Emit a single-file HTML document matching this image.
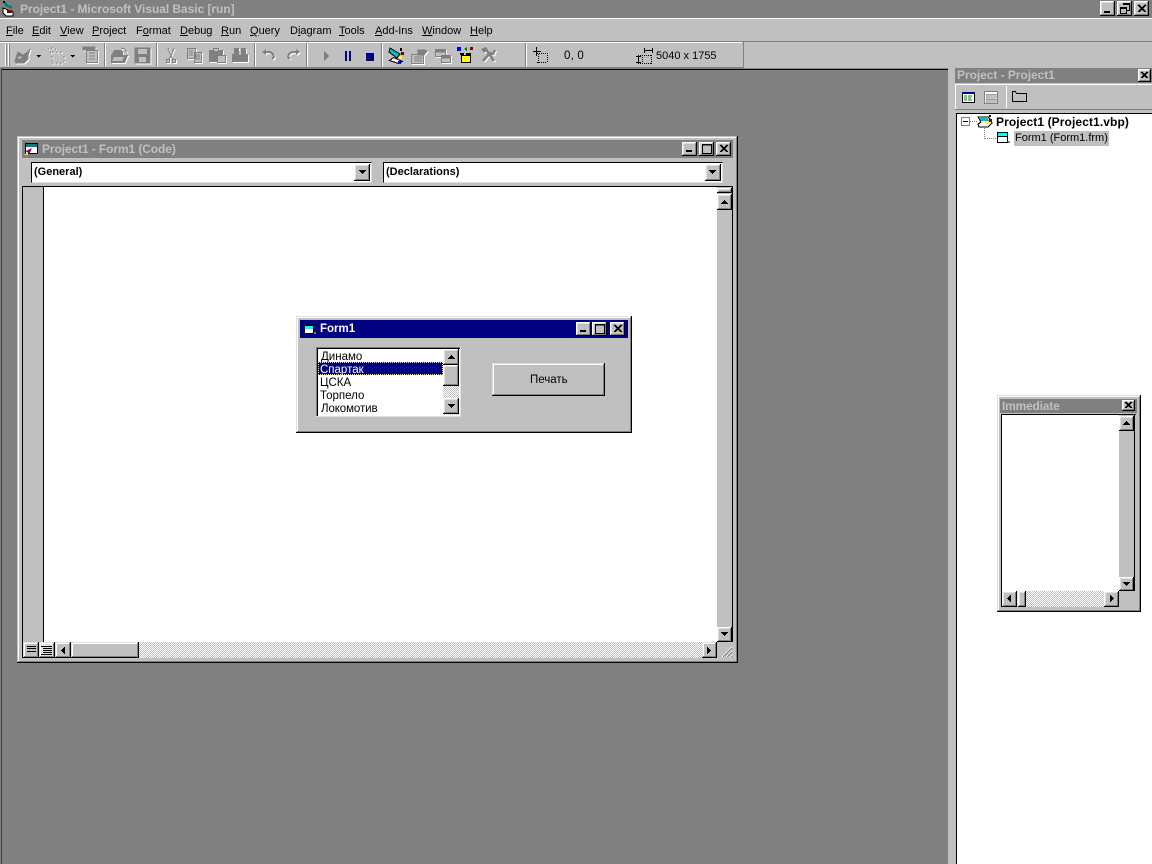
<!DOCTYPE html>
<html><head><meta charset="utf-8"><style>
html,body{margin:0;padding:0}
body{width:1152px;height:864px;overflow:hidden;background:#808080;position:relative;font:11px "Liberation Sans","Noto Sans CJK SC",sans-serif;color:#000}
div,span.a{position:absolute;box-sizing:border-box}
.t{white-space:nowrap;line-height:13px}
.g{background:#c0c0c0}
.w{background:#fff}
.k{background:#000}
.d{background:#808080}
.b{background:#c0c0c0;box-shadow:inset -1px -1px #000,inset 1px 1px #fff,inset -2px -2px #808080,inset 2px 2px #dfdfdf}
.f{box-shadow:inset -1px -1px #000,inset 1px 1px #dfdfdf,inset -2px -2px #808080,inset 2px 2px #fff;background:#c0c0c0}
.h{background:repeating-conic-gradient(#fff 0 25%,#c0c0c0 0 50%) 0 0/2px 2px}
.tt{font-weight:bold;color:#c0c0c0;font-size:12px;white-space:nowrap;line-height:14px}
.sep{width:2px;height:24px;top:43px;background:#fff;border-left:1px solid #808080}
</style></head><body>
<!-- Main title -->
<div class="tt" style="left:20px;top:2px;letter-spacing:-.05px">Project1 - Microsoft Visual Basic [run]</div>
<div class="w" style="left:0;top:18px;width:1152px;height:1px"></div>
<div class="g" style="left:0;top:19px;width:1152px;height:22px"></div>
<div class="d" style="left:0;top:41px;width:1152px;height:1px"></div>
<div class="g" style="left:0;top:42px;width:1152px;height:26px"></div>
<div class="w" style="left:0;top:42px;width:742px;height:1px"></div>
<div class="d" style="left:0;top:67px;width:743px;height:2px"></div>
<div class="d" style="left:743px;top:42px;width:1px;height:26px"></div>
<div class="k" style="left:2px;top:69px;width:946px;height:1px"></div>
<div class="k" style="left:1px;top:69px;width:1px;height:795px;opacity:.5"></div>
<!-- Menu -->
<div class="t" style="left:6px;top:25px"><u>F</u>ile</div>
<div class="t" style="left:32px;top:25px"><u>E</u>dit</div>
<div class="t" style="left:60px;top:25px"><u>V</u>iew</div>
<div class="t" style="left:92px;top:25px"><u>P</u>roject</div>
<div class="t" style="left:136px;top:25px">F<u>o</u>rmat</div>
<div class="t" style="left:180px;top:25px"><u>D</u>ebug</div>
<div class="t" style="left:221px;top:25px"><u>R</u>un</div>
<div class="t" style="left:250px;top:25px"><u>Q</u>uery</div>
<div class="t" style="left:290px;top:25px">D<u>i</u>agram</div>
<div class="t" style="left:339px;top:25px"><u>T</u>ools</div>
<div class="t" style="left:375px;top:25px"><u>A</u>dd-Ins</div>
<div class="t" style="left:422px;top:25px"><u>W</u>indow</div>
<div class="t" style="left:470px;top:25px"><u>H</u>elp</div>
<!-- Main window buttons -->
<div class="b" style="left:1100px;top:1px;width:15px;height:15px"></div>
<div class="b" style="left:1117px;top:1px;width:15px;height:15px"></div>
<div class="b" style="left:1134px;top:1px;width:15px;height:15px"></div>
<!-- Toolbar gripper & seps -->
<div class="w" style="left:5px;top:44px;width:2px;height:22px;border-right:1px solid #808080"></div>
<div class="w" style="left:8px;top:44px;width:2px;height:22px;border-right:1px solid #808080"></div>
<div class="sep" style="left:104px"></div>
<div class="sep" style="left:156px"></div>
<div class="sep" style="left:254px"></div>
<div class="sep" style="left:306px"></div>
<div class="sep" style="left:381px"></div>
<div class="sep" style="left:525px"></div>
<div class="t" style="left:564px;top:50px;font-size:11.5px;letter-spacing:.2px">0, 0</div>
<div class="t" style="left:656px;top:50px;font-size:11px">5040 x 1755</div>
<!-- Right panel -->
<div class="g" style="left:948px;top:68px;width:204px;height:796px"></div>
<div class="d" style="left:955px;top:68px;width:197px;height:15px"></div>
<div class="tt" style="left:957px;top:68px;letter-spacing:-.05px">Project - Project1</div>
<div class="b" style="left:1138px;top:69px;width:13px;height:13px"></div>
<div class="w" style="left:955px;top:84px;width:197px;height:1px"></div>
<div class="w" style="left:955px;top:84px;width:1px;height:25px"></div>
<div class="d" style="left:955px;top:109px;width:197px;height:1px"></div>
<div class="w" style="left:956px;top:113px;width:196px;height:751px"></div>
<div class="k" style="left:956px;top:113px;width:196px;height:1px"></div>
<div class="k" style="left:956px;top:113px;width:1px;height:751px"></div>
<div class="t" style="left:996px;top:116px;font-weight:bold;font-size:12px;letter-spacing:.1px">Project1 (Project1.vbp)</div>
<div class="g" style="left:1014px;top:131px;width:95px;height:15px"></div>
<div class="t" style="left:1015px;top:132px">Form1 (Form1.frm)</div>
<div style="left:1006px;top:86px;width:1px;height:22px;background:#fff"></div>
<!-- Code window -->
<div class="g" style="left:17px;top:136px;width:721px;height:527px;box-shadow:inset -1px -1px #000,inset 1px 1px #c0c0c0,inset -2px -2px #808080,inset 2px 2px #fff"></div>
<div class="d" style="left:22px;top:140px;width:711px;height:18px"></div>
<div class="tt" style="left:42px;top:142px;letter-spacing:-.1px">Project1 - Form1 (Code)</div>
<div class="b" style="left:682px;top:142px;width:15px;height:14px"></div>
<div class="b" style="left:699px;top:142px;width:15px;height:14px"></div>
<div class="b" style="left:716px;top:142px;width:15px;height:14px"></div>
<!-- combos -->
<div class="w" style="left:31px;top:162px;width:341px;height:21px;border-top:1px solid #000;border-left:1px solid #000;border-bottom:1px solid #dfdfdf;border-right:1px solid #dfdfdf"></div>
<div class="t" style="left:34px;top:166px;font-weight:bold">(General)</div>
<div class="b" style="left:354px;top:164px;width:16px;height:17px"></div>
<div class="w" style="left:383px;top:162px;width:340px;height:21px;border-top:1px solid #000;border-left:1px solid #000;border-bottom:1px solid #dfdfdf;border-right:1px solid #dfdfdf"></div>
<div class="t" style="left:386px;top:166px;font-weight:bold">(Declarations)</div>
<div class="b" style="left:705px;top:164px;width:16px;height:17px"></div>
<!-- code area -->
<div class="k" style="left:22px;top:186px;width:711px;height:1px"></div>
<div class="k" style="left:22px;top:186px;width:1px;height:472px"></div>
<div class="w" style="left:23px;top:187px;width:694px;height:455px"></div>
<div class="g" style="left:23px;top:187px;width:20px;height:455px"></div>
<div class="k" style="left:43px;top:187px;width:1px;height:455px"></div>
<div class="g" style="left:717px;top:187px;width:16px;height:471px"></div>
<div class="k" style="left:732px;top:186px;width:1px;height:456px"></div>
<div class="b" style="left:717px;top:188px;width:15px;height:5px"></div>
<div class="b" style="left:717px;top:194px;width:15px;height:16px"></div>
<div class="b" style="left:717px;top:627px;width:15px;height:15px"></div>
<div class="f" style="left:23px;top:642px;width:16px;height:16px"></div>
<div class="f" style="left:39px;top:642px;width:16px;height:16px;background:#dfdfdf"></div>
<div class="f" style="left:55px;top:642px;width:16px;height:16px"></div>
<div class="f" style="left:71px;top:642px;width:68px;height:16px"></div>
<div class="h" style="left:139px;top:642px;width:563px;height:16px"></div>
<div class="f" style="left:702px;top:642px;width:15px;height:16px"></div>
<!-- Form1 -->
<div class="g" style="left:296px;top:316px;width:336px;height:117px;box-shadow:inset -1px -1px #000,inset 1px 1px #dfdfdf,inset -2px -2px #808080,inset 2px 2px #fff"></div>
<div style="left:300px;top:320px;width:328px;height:18px;background:#000080"></div>
<div class="t" style="left:320px;top:323px;color:#fff;font-weight:bold;font-size:11.5px">Form1</div>
<div class="b" style="left:576px;top:322px;width:15px;height:14px"></div>
<div class="b" style="left:592px;top:322px;width:15px;height:14px"></div>
<div class="b" style="left:610px;top:322px;width:15px;height:14px"></div>
<!-- listbox -->
<div class="w" style="left:316px;top:347px;width:145px;height:70px;box-shadow:inset -1px -1px #dfdfdf,inset 1px 1px #808080,inset 2px 2px #000"></div>
<div class="t" style="left:321px;top:351px;font-size:11.5px">Динамо</div>
<div style="left:318px;top:362px;width:125px;height:13px;background:#000080;outline:1px dotted #ff0;outline-offset:-1px"></div>
<div class="t" style="left:320px;top:364px;font-size:11.5px;color:#fff">Спартак</div>
<div class="t" style="left:320px;top:377px;font-size:11.5px">ЦСКА</div>
<div class="t" style="left:320px;top:390px;font-size:11.5px">Торпело</div>
<div class="t" style="left:321px;top:403px;font-size:11.5px;letter-spacing:-.1px">Локомотив</div>
<div class="h" style="left:443px;top:349px;width:16px;height:66px"></div>
<div class="b" style="left:443px;top:349px;width:16px;height:16px"></div>
<div class="b" style="left:443px;top:365px;width:16px;height:21px"></div>
<div class="b" style="left:443px;top:398px;width:16px;height:16px"></div>
<!-- print button -->
<div class="f" style="left:492px;top:363px;width:113px;height:33px"></div>
<div class="t" style="left:530px;top:374px;font-size:11.5px">Печать</div>
<!-- Immediate -->
<div class="g" style="left:997px;top:395px;width:144px;height:217px;box-shadow:inset -1px -1px #000,inset 1px 1px #dfdfdf,inset -2px -2px #808080,inset 2px 2px #fff"></div>
<div class="d" style="left:1000px;top:399px;width:137px;height:14px"></div>
<div class="tt" style="left:1002px;top:399px;letter-spacing:-.2px">Immediate</div>
<div class="b" style="left:1122px;top:400px;width:13px;height:11px"></div>
<div class="w" style="left:1001px;top:415px;width:118px;height:176px"></div>
<div class="k" style="left:1001px;top:414px;width:135px;height:1px"></div>
<div class="k" style="left:1001px;top:414px;width:1px;height:193px"></div>
<div class="k" style="left:1134px;top:414px;width:1px;height:177px"></div>
<div class="g" style="left:1119px;top:415px;width:15px;height:176px"></div>
<div class="b" style="left:1119px;top:416px;width:15px;height:15px"></div>
<div class="b" style="left:1119px;top:577px;width:15px;height:14px"></div>
<div class="h" style="left:1002px;top:591px;width:117px;height:16px"></div>
<div class="b" style="left:1002px;top:591px;width:15px;height:16px"></div>
<div class="b" style="left:1018px;top:591px;width:8px;height:16px"></div>
<div class="b" style="left:1104px;top:591px;width:15px;height:16px"></div>
<!-- Disabled toolbar icons, with white emboss -->
<svg style="position:absolute;left:0;top:0;filter:drop-shadow(1px 1px 0 #fff)" width="1152" height="100" viewBox="0 0 1152 100" fill="none">
<g stroke="#808080" fill="#808080" shape-rendering="crispEdges">
<path d="M15 61l3-9 5 3 5-3 2-3-2 6 0 4-4 4H16z"/><path d="M18 56h5l-2 3h-4z" fill="#c0c0c0"/>
<path fill="none" d="M48 49h1M52 47v2M55 49h1M50 52l1 1"/>
<path fill="none" d="M52 52h2M56 52h2M60 52h2M52 56v2M52 60v2M52 63h2M56 63h2M60 63h2M64 56v2M64 60v2"/>
<path fill="#c0c0c0" d="M86.500 50.500h11v12h-11z"/><path d="M83 47h12v3H83z"/><path fill="none" d="M89 53h6M89 56h6M89 59h6"/>
<path d="M111.500 55.500l3-5h6l2 2v3h5l-3 7h-13z"/><path fill="#c0c0c0" stroke="none" d="M114 57h10l-2 4h-10z"/><path fill="none" d="M121 48l4 1 2 3"/>
<path d="M135 48h15v15h-15z"/><path fill="#c0c0c0" stroke="none" d="M138 49h9v5h-9zM139 57h7v5h-7z"/>
<path fill="none" d="M168 48l3 8 3-8"/><path fill="none" d="M171 56l-3 4M171 56l3 4"/><path fill="#c0c0c0" d="M166.500 59.500h3v3h-3zM172.500 59.500h3v3h-3z"/>
<path fill="#c0c0c0" d="M187.500 48.500h8v10h-8zM194.500 52.500h7v10h-7z"/><path fill="none" d="M189 51h4M189 53h4M189 55h4M196 55h4M196 57h4M196 59h4"/>
<path d="M209.500 50.500h13v11h-13z"/><path fill="#c0c0c0" d="M213.500 48.500h5v3h-5zM217.500 55.500h8v7h-8z"/>
<path d="M234.500 48.500h4v6h-4zM241.500 48.500h4v6h-4zM232.500 54.500h7v7h-7zM240.500 54.500h7v7h-7z"/><path fill="#c0c0c0" stroke="none" d="M239 51h2v4h-2z"/>
<path fill="#c0c0c0" d="M411.500 54.500h12v9h-12z"/><path fill="none" d="M414 57h8M414 59h8M414 61h8"/><path d="M418 50h7l2 1-3 4h-6z"/>
<path fill="#c0c0c0" d="M435.500 49.500h10v7h-10zM441.500 55.500h9v7h-9z"/><path d="M436 50h9v2h-9zM442 56h8v2h-8z"/>
</g>
<g stroke="#808080" fill="#808080">
<path fill="none" stroke-width="2" d="M264 52h6l3 2 1 3-2 2M298 52h-6l-3 2-1 3 2 2"/><path d="M266 49v6l-4-3zM296 49v6l4-3z" stroke="none"/>
<path fill="none" stroke-width="2.500" d="M483 51l3-2 8 12M495 50l-2 4-3-1-7 8"/><path d="M481 49l5-2 2 3-4 3z" stroke="none"/>
</g>
</svg>
<!-- Icons -->
<svg style="position:absolute;left:0;top:0" width="1152" height="864" viewBox="0 0 1152 864" fill="none" shape-rendering="crispEdges">
<!-- app icon -->
<path d="M3 8l10 4v4H6L3 13z" fill="#fff" stroke="#000"/><path d="M4 2l2 0 2 3 4 1v3L5 6z" fill="#008080"/><path d="M7 10h5v3H7z" fill="#800000"/><path d="M3 1h2v2H3z" fill="#000"/>
<!-- window btn glyphs -->
<path d="M1104 11h6v2h-6z" fill="#000"/>
<path d="M1120.500 7.500h6v6h-6zM1123.500 4.500h6v6h-3M1120.500 8.500h6" stroke="#000"/><path d="M1123 3h7v2h-7z" fill="#000"/>
<path d="M1138 5l7 7m0-7l-7 7M1139 5l7 7m0-7l-7 7" stroke="#000"/>
<path d="M1141 72l6 6m0-6l-6 6M1142 72l6 6m0-6l-6 6" stroke="#000"/>
<path d="M686 150h6v2h-6z" fill="#000"/><path d="M702.500 144.500h9v9h-9zM702 145h10" stroke="#000"/>
<path d="M720 145l7 7m0-7l-7 7M721 145l7 7m0-7l-7 7" stroke="#000"/>
<path d="M580 330h6v2h-6z" fill="#000"/><path d="M595.500 324.500h9v9h-9zM595 325h10" stroke="#000"/>
<path d="M614 325l7 7m0-7l-7 7M615 325l7 7m0-7l-7 7" stroke="#000"/>
<path d="M1125 402l6 6m0-6l-6 6M1126 402l6 6m0-6l-6 6" stroke="#000"/>
<!-- arrows -->
<path d="M359 170h7v1h-1v1h-1v1h-1v1h-1v-1h-1v-1h-1v-1h-1zM709 170h7v1h-1v1h-1v1h-1v1h-1v-1h-1v-1h-1v-1h-1zM721 204h7v-1h-1v-1h-1v-1h-1v-1h-1v1h-1v1h-1v1h-1zM721 632h7v1h-1v1h-1v1h-1v1h-1v-1h-1v-1h-1v-1h-1zM448 359h7v-1h-1v-1h-1v-1h-1v-1h-1v1h-1v1h-1v1h-1zM448 404h7v1h-1v1h-1v1h-1v1h-1v-1h-1v-1h-1v-1h-1zM1123 425h7v-1h-1v-1h-1v-1h-1v-1h-1v1h-1v1h-1v1h-1zM1123 582h7v1h-1v1h-1v1h-1v1h-1v-1h-1v-1h-1v-1h-1z" fill="#000"/>
<path d="M65 647v7h-1v-1h-1v-1h-1v-1h-1v-1h1v-1h1v-1h1v-1zM707 647v7h1v-1h1v-1h1v-1h1v-1h-1v-1h-1v-1h-1v-1zM1011 595v7h-1v-1h-1v-1h-1v-1h-1v-1h1v-1h1v-1h1v-1zM1110 595v7h1v-1h1v-1h1v-1h1v-1h-1v-1h-1v-1h-1v-1z" fill="#000"/>
<!-- code view glyphs -->
<path d="M27 646.500h9M27 648.500h9M27 651.500h9M41 646.500h11M43 648.500h9M43 650.500h9M43 652.500h9M41 654.500h11" stroke="#000"/>
<!-- size grip -->
<path d="M722 657l10-10M726 657l6-6M730 657l2-2" stroke="#fff"/><path d="M723 657l9-9M727 657l5-5M731 657l1-1" stroke="#808080"/>
<!-- run buttons -->
<path d="M324 51l5 5-5 5z" fill="#808080"/>
<path d="M345 51h2v10h-2zM349 51h2v10h-2z" fill="#000080"/>
<path d="M366 53h8v8h-8z" fill="#000080"/>
<path d="M36 55h5l-2.500 2.500zM70 55h5l-2.500 2.500z" fill="#000"/>
<!-- project explorer colored -->
<path d="M389.500 60.500l4-3 9 4-4 2z" fill="#fff" stroke="#000"/>
<path d="M390 48l10 6-3 4-8-6z" fill="#00c0c0" stroke="#000"/>
<path d="M400 48h2v3h-2z" fill="#000"/><path d="M401 52h3v3h-3z" fill="#800000"/><path d="M399 56h3v3h-3z" fill="#ff0"/><path d="M398 61h3v3h-3z" fill="#00f"/>
<!-- object browser -->
<path d="M457 47h4v4h-4z" fill="#00f"/><path d="M470 47h3v3h-3z" fill="#800000"/><path d="M464 49l3-2v4z" fill="#008000"/>
<path d="M461.500 55.500h9v7h-9z" fill="#ff0" stroke="#000"/><path d="M460 53h4v2h-4zM466 53h5v2h-5z" fill="#000"/>
<!-- position / size -->
<path d="M536.500 47v9M533 51.500h8" stroke="#000"/>
<path d="M537 53.500h10M537 62.500h10M538.500 54v9M547.500 53v10" stroke="#000" stroke-dasharray="1 1"/>
<path d="M638 55.500h14M638 63.500h14M642.500 55v9M651.500 55v9" stroke="#000" stroke-dasharray="1 1"/>
<path d="M644 50.500h8M644.500 48v5M652.500 48v5M636 56.500h5M638.500 57v5M636 62.500h5" stroke="#000"/>
<!-- project toolbar -->
<path d="M962.500 92.500h12v10h-12z" fill="#fff" stroke="#000"/><path d="M962 92h13v2h-13z" fill="#000080"/><path d="M964 96h3M964 98h3M964 100h3M968 96h4M968 98h3M968 100h4" stroke="#008000"/>
<path d="M984.500 91.500h13v12h-13z" fill="#fff" stroke="#808080"/><path d="M986 94h10v4h-10zM986 99h10v3h-10z" fill="#c0c0c0" stroke="#808080" stroke-width=".5"/>
<path d="M1012.500 91.500h3l1 2h10v8h-14z" stroke="#000"/>
<!-- tree -->
<path d="M961.500 117.500h8v8h-8z" stroke="#808080"/>
<path d="M963 121.500h5" stroke="#000"/>
<path d="M970 121.500h8" stroke="#808080" stroke-dasharray="1 1"/>
<path d="M984.500 128v11M985 138.500h11" stroke="#808080" stroke-dasharray="1 1"/>
<path d="M979 127l-1-3 3-2-3-5h10l3 3 1 3-4 4z" fill="#fff" stroke="#000"/><path d="M979 118h8l2 2v1h-8z" fill="#00c0c0"/>
<path d="M989 119h3v3h-3z" fill="#800000"/><path d="M989 115h2v2h-2z" fill="#000"/><path d="M985 122h5v2h-5z" fill="#ff0"/>
<path d="M997.500 132.500h10v10h-10z" fill="#fff" stroke="#000"/><path d="M998 133h9v3h-9z" fill="#00ffff"/><path d="M998 136.500h9" stroke="#000"/><path d="M1008 141h2v2h-2z" fill="#808080"/>
<!-- code title icon -->
<path d="M25.500 143.500h12v10h-12z" fill="#fff" stroke="#000"/><path d="M26 144h11v3h-11z" fill="#008080"/>
<path d="M26 151l6-3-3 7z" fill="#800080"/><path d="M24 155l4-3v3z" fill="#ff0"/>
<!-- form1 title icon -->
<path d="M304.500 325.500h9v8h-9z" fill="#fff" stroke="#000"/><path d="M305 326h8v3h-8z" fill="#00ffff"/><path d="M314 332h2v2h-2z" fill="#808080"/>
</svg>
</body></html>
